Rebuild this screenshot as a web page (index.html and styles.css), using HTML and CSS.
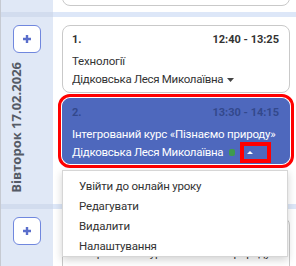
FILE: index.html
```html
<!DOCTYPE html>
<html lang="uk">
<head>
  <meta charset="UTF-8">
  <meta name="viewport" content="width=device-width, initial-scale=1.0">
  <title>Розклад</title>
  <link rel="stylesheet" href="styles.css">
</head>
<body>
  <div class="schedule">
    <div class="day day-prev">
      <div class="day-side"></div>
      <div class="day-lessons">
        <div class="lesson lesson-tail"></div>
      </div>
    </div>

    <div class="day">
      <div class="day-side">
        <button class="add-btn" type="button">
          <svg width="10" height="10" viewBox="0 0 10 10"><path d="M5 1v8M1 5h8"/></svg>
        </button>
        <div class="day-name">Вівторок 17.02.2026</div>
      </div>
      <div class="day-lessons">
        <div class="lesson">
          <div class="lesson-head"><span>1.</span><span>12:40 - 13:25</span></div>
          <div class="lesson-title">Технології</div>
          <div class="lesson-teacher">Дідковська Леся Миколаївна
            <svg class="caret" width="7" height="4" viewBox="0 0 7 4"><path d="M0 0h7L3.5 4z"/></svg>
          </div>
        </div>
        <div class="lesson lesson-active">
          <div class="lesson-head"><span>2.</span><span>13:30 - 14:15</span></div>
          <div class="lesson-title">Інтегрований курс «Пізнаємо природу»</div>
          <div class="lesson-teacher">
            <span>Дідковська Леся Миколаївна</span>
            <span class="status-dot"></span>
            <span class="menu-toggle">
              <svg width="6" height="3" viewBox="0 0 6 3"><path d="M0 3h6L3 0z"/></svg>
            </span>
          </div>
          <ul class="lesson-menu">
            <li>Увійти до онлайн уроку</li>
            <li>Редагувати</li>
            <li>Видалити</li>
            <li>Налаштування</li>
          </ul>
        </div>
      </div>
    </div>

    <div class="day">
      <div class="day-side">
        <button class="add-btn" type="button">
          <svg width="10" height="10" viewBox="0 0 10 10"><path d="M5 1v8M1 5h8"/></svg>
        </button>
        <div class="day-name">Середа 18.02.2026</div>
      </div>
      <div class="day-lessons">
        <div class="lesson">
          <div class="lesson-head"><span>1.</span><span>12:40 - 13:25</span></div>
          <div class="lesson-title">Інтегрований курс «Пізнаємо природу»</div>
          <div class="lesson-teacher">Дідковська Леся Миколаївна</div>
        </div>
        <div class="lesson">
          <div class="lesson-head"><span>2.</span><span>13:30 - 14:15</span></div>
          <div class="lesson-title">Технології</div>
          <div class="lesson-teacher">Дідковська Леся Миколаївна</div>
        </div>
        <div class="lesson">
          <div class="lesson-head"><span>3.</span><span>14:25 - 15:10</span></div>
          <div class="lesson-title">Українська мова</div>
          <div class="lesson-teacher">Дідковська Леся Миколаївна</div>
        </div>
      </div>
    </div>
  </div>
</body>
</html>
```

FILE: styles.css
```css
body {
  margin: 0;
  font-family: Roboto, "Open Sans", sans-serif;
  color: #333;
  background: #fff;
}
.schedule {
  border-left: 1px solid #c6cad2;
  height: 266px;
  overflow: hidden;
}
.day {
  display: flex;
}
.day-side {
  width: 52px;
  flex: none;
  background: #e0e8f6;
  border-top: 5px solid #d2dcee;
  display: flex;
  flex-direction: column;
  align-items: center;
  padding: 8px 0 11px;
}
.day-lessons {
  flex: 1;
  min-width: 0;
  border-top: 5px solid #dde7f8;
  padding: 8px 6px 8px 9px;
}
.day-prev {
  height: 12px;
  overflow: hidden;
}
.day-prev .day-side,
.day-prev .day-lessons {
  border-top: 0;
  padding-top: 0;
  padding-bottom: 0;
}
.lesson-tail {
  height: 30px;
  margin-top: -24px;
  box-sizing: border-box;
}
.add-btn {
  width: 28px;
  height: 28px;
  padding: 0;
  margin-bottom: 9px;
  border: 1px solid #7087de;
  border-radius: 6px;
  background: #fff;
  display: flex;
  align-items: center;
  justify-content: center;
  cursor: pointer;
}
.add-btn svg path {
  stroke: #5a6ecb;
  stroke-width: 2.4;
}
.day-name {
  writing-mode: vertical-rl;
  transform: rotate(180deg);
  align-self: flex-start;
  margin: auto 0 auto 9px;
  font-family: "Open Sans", sans-serif;
  font-size: 13px;
  line-height: 13px;
  font-weight: bold;
  color: #555b66;
  white-space: nowrap;
}

.lesson {
  position: relative;
  border: 1px solid #c9c9c9;
  border-radius: 8px;
  padding: 6px 10px 4px 9px;
  background: #fff;
}
.lesson + .lesson {
  margin-top: 5px;
}
.lesson-head {
  display: flex;
  justify-content: space-between;
  font-size: 11px;
  line-height: 16px;
  font-weight: bold;
  margin-bottom: 4px;
}
.lesson-title,
.lesson-teacher {
  font-size: 11.5px;
  letter-spacing: -0.2px;
  line-height: 18px;
  white-space: nowrap;
  overflow: hidden;
}
.lesson-teacher {
  letter-spacing: -0.3px;
}
.caret {
  fill: #444;
  vertical-align: middle;
  margin-left: 1px;
}

.lesson-active {
  background: #4e68bd;
  border-color: #4e68bd;
  color: #fff;
  padding-bottom: 2px;
  outline: 3px solid #f00;
  outline-offset: 1px;
}
.lesson-active .lesson-head {
  color: #33488c;
}
.lesson-active .lesson-teacher {
  display: flex;
  align-items: center;
  overflow: visible;
}
.status-dot {
  width: 6px;
  height: 7px;
  border-radius: 2px;
  background: #3f9a4d;
  margin-left: 6px;
}
.menu-toggle {
  width: 23px;
  height: 13px;
  margin-left: 9px;
  outline: 4px solid #f00;
  display: flex;
  align-items: center;
  padding-left: 3px;
  box-sizing: border-box;
}
.menu-toggle svg {
  fill: #fff;
}

.lesson-menu {
  position: absolute;
  z-index: 5;
  top: calc(100% + 7px);
  left: -1px;
  right: 1px;
  margin: 0;
  padding: 5px 0 0;
  list-style: none;
  background: #fff;
  border: 1px solid #d6d6d6;
  box-shadow: 0 3px 8px rgba(0,0,0,0.18);
  color: #333;
  font-size: 11.5px;
  letter-spacing: -0.2px;
  line-height: 20px;
}
.lesson-menu li {
  padding: 0 16px;
}
```
